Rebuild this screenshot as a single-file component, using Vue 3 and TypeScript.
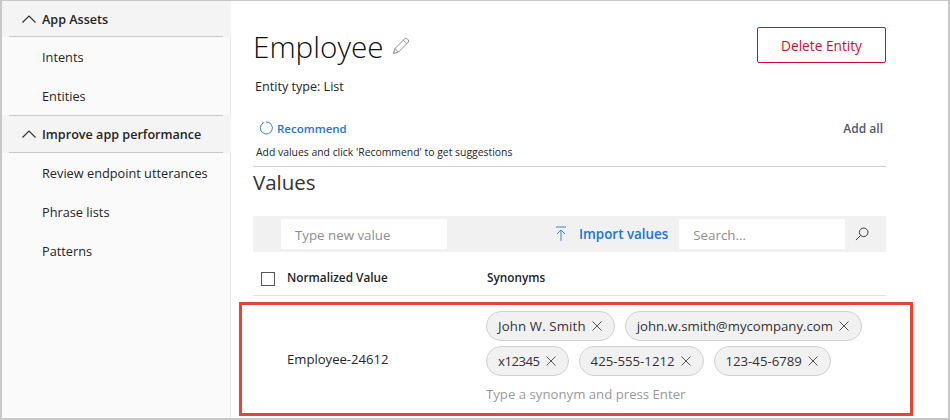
<script setup lang="ts">
const top_nav = ['Intents', 'Entities']
const perf_nav = ['Review endpoint utterances', 'Phrase lists', 'Patterns']
const synonym_rows = [
  ['John W. Smith', 'john.w.smith@mycompany.com'],
  ['x12345', '425-555-1212', '123-45-6789'],
]
</script>

<template>
  <div class="page">
    <aside class="sidebar">
      <div class="group-head">
        <svg class="chevron" viewBox="0 0 16 10" width="16" height="10"><path d="M1.5 8.5 8 2l6.5 6.5" /></svg>
        <span>App Assets</span>
      </div>
      <a v-for="item in top_nav" :key="item" class="nav-item">{{ item }}</a>
      <div class="group-head second">
        <svg class="chevron" viewBox="0 0 16 10" width="16" height="10"><path d="M1.5 8.5 8 2l6.5 6.5" /></svg>
        <span>Improve app performance</span>
      </div>
      <a v-for="item in perf_nav" :key="item" class="nav-item">{{ item }}</a>
    </aside>

    <main class="content">
      <div class="title-row">
        <div class="title">
          <h1>Employee</h1>
          <svg class="pencil" viewBox="0 0 18 18" width="18" height="18">
            <path d="M1.5 16.5 3 11.5 12.8 1.7a1.6 1.6 0 0 1 2.2 0l1.3 1.3a1.6 1.6 0 0 1 0 2.2L6.5 15Z" />
            <path d="M3 11.5 6.5 15M11.3 3.2l3.5 3.5" />
          </svg>
        </div>
        <button class="delete">Delete Entity</button>
      </div>
      <p class="entity-type">Entity type: List</p>

      <div class="recommend-row">
        <a class="recommend">
          <svg viewBox="0 0 14 14" width="14" height="14"><path d="M4.2 1.9A6 6 0 1 0 7 1" /><path d="M3.2 0.6 4.4 2 2.8 3" /></svg>
          Recommend
        </a>
        <span class="add-all">Add all</span>
      </div>
      <p class="hint">Add values and click 'Recommend' to get suggestions</p>

      <h2>Values</h2>

      <div class="toolbar">
        <div class="field new-value">Type new value</div>
        <a class="import">
          <svg viewBox="0 0 12 16" width="12" height="16"><path d="M1 1h10M6 15V4M2 8l4-4 4 4" /></svg>
          Import values
        </a>
        <div class="field search">Search...</div>
        <svg class="search-icon" viewBox="0 0 15 15" width="14" height="14">
          <circle cx="9.3" cy="5.7" r="4.6" /><path d="M6 9 1 14" />
        </svg>
      </div>

      <div class="table-head">
        <span class="checkbox"></span>
        <span class="col-name">Normalized Value</span>
        <span>Synonyms</span>
      </div>

      <div class="row">
        <div class="row-name">Employee-24612</div>
        <div class="synonyms">
          <div v-for="(chips, i) in synonym_rows" :key="i" class="chip-line">
            <span v-for="chip in chips" :key="chip" class="chip">
              {{ chip }}
              <svg viewBox="0 0 10 10" width="10" height="10"><path d="M.5.5l9 9M9.5.5l-9 9" /></svg>
            </span>
          </div>
          <div class="synonym-input">Type a synonym and press Enter</div>
        </div>
      </div>
    </main>
  </div>
</template>

<style scoped>
.page {
  display: flex;
  width: 950px;
  height: 420px;
  box-sizing: border-box;
  border: 2px solid #c8c8c8;
  border-top-width: 1px;
  overflow: hidden;
  background: #fff;
  color: #252525;
  font-family: "Open Sans", sans-serif;
  font-size: 12.6px;
}

.sidebar {
  flex: none;
  width: 229px;
  background: #fafafa;
  border-right: 1px solid #e4e4e4;
  box-sizing: border-box;
}

.group-head {
  display: flex;
  align-items: center;
  gap: 5px;
  height: 36px;
  margin: 0 -1px 0 0;
  padding-left: 19px;
  background: #f4f4f4;
  font-weight: 600;
  position: relative;
  box-sizing: border-box;
}

.group-head.second {
  height: 38px;
}

.group-head.second::before {
  content: "";
  position: absolute;
  left: 7px;
  right: 8px;
  top: 0;
  height: 1px;
  background: #c8c8c8;
}

.group-head::after {
  content: "";
  position: absolute;
  left: 7px;
  right: 8px;
  bottom: 0;
  height: 1px;
  background: #c8c8c8;
}

.chevron {
  fill: none;
  stroke: #333;
  stroke-width: 1.2;
}

.nav-item {
  display: block;
  height: 39px;
  line-height: 40px;
  padding-left: 40px;
  font-size: 12.75px;
}

.content {
  flex: 1;
  padding: 26px 62px 0 22px;
  min-width: 0;
}

.title-row {
  display: flex;
  justify-content: space-between;
  align-items: flex-start;
  height: 49px;
}

.title {
  display: flex;
  align-items: center;
  gap: 8px;
  height: 38px;
}

h1 {
  margin: 0;
  font-size: 29.7px;
  font-weight: 300;
  color: #111;
}

.pencil {
  fill: none;
  stroke: #8a8a8a;
  stroke-width: 1;
}

.delete {
  width: 129px;
  height: 36px;
  border: 1px solid #c8102e;
  border-radius: 2px;
  background: #fff;
  color: #c8102e;
  font: inherit;
  font-size: 13.7px;
  font-weight: 500;
}

.entity-type {
  margin: 0;
  padding-left: 2px;
  height: 20px;
  line-height: 22px;
}

.recommend-row {
  display: flex;
  justify-content: space-between;
  align-items: center;
  margin-top: 22px;
  height: 20px;
  padding: 0 3px 0 6px;
}

.recommend {
  display: flex;
  align-items: center;
  gap: 4px;
  color: #1f73d8;
  font-weight: 600;
  font-size: 11.5px;
}

.recommend svg {
  fill: none;
  stroke: #3b83d9;
  stroke-width: 1;
}

.add-all {
  color: #50596c;
  font-weight: 600;
  font-size: 12px;
}

.hint {
  margin: 5px 0 0;
  height: 24px;
  padding: 0 0 0 3px;
  line-height: 18px;
  font-size: 10.4px;
  border-bottom: 1px solid #cfcfcf;
  box-sizing: border-box;
}

h2 {
  margin: 0;
  height: 49px;
  line-height: 30px;
  font-size: 20.5px;
  font-weight: 400;
  color: #333;
}

.toolbar {
  display: flex;
  align-items: center;
  height: 36px;
  background: #f1f1f1;
  padding-left: 28px;
}

.field {
  height: 30px;
  line-height: 32px;
  width: 166px;
  box-sizing: border-box;
  background: #fff;
  padding-left: 14px;
  color: #8d8d8d;
  font-size: 13.3px;
}

.import {
  display: flex;
  align-items: center;
  gap: 12px;
  margin-left: 108px;
  color: #1f73d8;
  font-weight: 600;
  font-size: 13.4px;
}

.import svg {
  fill: none;
  stroke: #3b83d9;
  stroke-width: 1;
}

.search {
  margin-left: 11px;
}

.search-icon {
  margin-left: 10px;
  fill: none;
  stroke: #333;
  stroke-width: 1;
}

.table-head {
  display: flex;
  align-items: center;
  height: 44px;
  padding: 6px 0 0 8px;
  box-sizing: border-box;
  border-bottom: 1px solid #e2e2e2;
  font-weight: 600;
  font-size: 11.8px;
}

.checkbox {
  width: 14px;
  height: 14px;
  box-sizing: border-box;
  border: 1px solid #555;
  margin: 4px 12px 0 0;
}

.col-name {
  width: 200px;
}

.row {
  display: flex;
  align-items: center;
  margin: 6px -27px 0 -14px;
  height: 114px;
  box-sizing: border-box;
  border: 3px solid #ea4335;
  padding-left: 45px;
}

.row-name {
  width: 199px;
  font-size: 13.1px;
}

.synonyms {
  align-self: flex-start;
  display: flex;
  flex-direction: column;
  gap: 5px;
  padding-top: 6px;
  font-size: 13.2px;
}

.chip-line {
  display: flex;
  gap: 10px;
}

.chip {
  display: flex;
  align-items: center;
  gap: 6px;
  height: 30px;
  padding: 0 12px 0 11px;
  box-sizing: border-box;
  border: 1px solid #d0d0d0;
  border-radius: 15px;
  background: #f1f1f1;
  color: #333;
}

.chip-line:first-child .chip:first-child {
  letter-spacing: 0.15px;
}

.chip-line:nth-child(2) .chip:first-child {
  letter-spacing: -0.5px;
}

.chip svg {
  fill: none;
  stroke: #555;
  stroke-width: 1;
}

.synonym-input {
  height: 26px;
  line-height: 26px;
  color: #9a9a9a;
}
</style>
